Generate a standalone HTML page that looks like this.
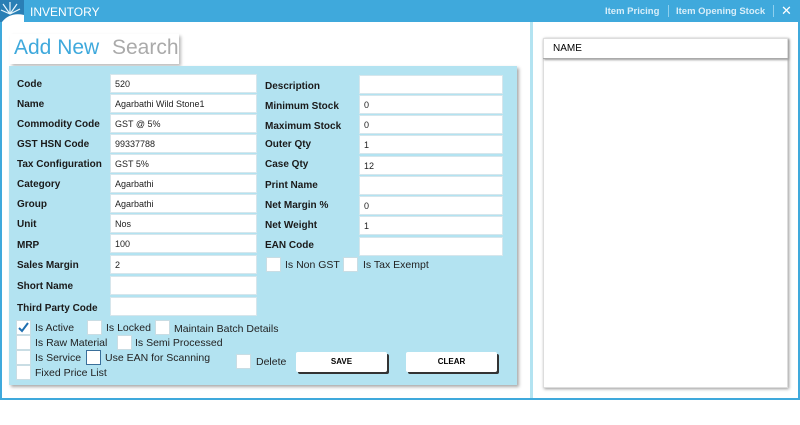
<!DOCTYPE html>
<html><head><meta charset="utf-8"><style>
*{margin:0;padding:0;box-sizing:border-box}
body{width:800px;height:425px;background:#fff;position:relative;overflow:hidden;font-family:"Liberation Sans",sans-serif}
.a{position:absolute}
.lbl{position:absolute;font-size:10px;font-weight:bold;color:#1a1a1a;margin-top:1px}
.inp{position:absolute;background:#fff;border:1px solid #d6e6ec;height:19px;font-size:9px;color:#222;padding:4px 0 0 4px}
.cb{position:absolute;width:15px;height:15px;background:#fff;border:1px solid #c9dde4}
.ct{position:absolute;font-size:10.5px;color:#222}
.btn{position:absolute;background:#fff;border-radius:2px;box-shadow:2px 2px 0 #333;font-size:8px;font-weight:bold;text-align:center;line-height:20px;height:20px}
</style></head><body>
<div class="a" style="left:0;top:0;width:800px;height:22px;background:#3fa9dc"></div>
<div class="a" style="left:0;top:0;width:24px;height:22px;background:#2a7fb5;overflow:hidden">
<svg width="24" height="22"><g stroke="#e8f6fd" stroke-width="1.2"><line x1="10" y1="14" x2="10" y2="2"/><line x1="10" y1="14" x2="3" y2="4"/><line x1="10" y1="14" x2="17" y2="4"/><line x1="10" y1="14" x2="1" y2="10"/><line x1="10" y1="14" x2="20" y2="9"/></g><path d="M2 22 Q10 12 24 15 L24 22Z" fill="#fff"/></svg></div>
<div class="a" style="left:30px;top:5px;color:#fff;font-size:12px">INVENTORY</div>
<div class="a" style="left:605px;top:6px;color:#d8eef9;font-size:9.5px;font-weight:bold">Item Pricing</div>
<div class="a" style="left:668px;top:5px;width:1px;height:12px;background:#8fd0ee"></div>
<div class="a" style="left:676px;top:6px;color:#d8eef9;font-size:9.5px;font-weight:bold">Item Opening Stock</div>
<div class="a" style="left:773px;top:5px;width:1px;height:12px;background:#8fd0ee"></div>
<div class="a" style="left:781px;top:3px;color:#fff;font-size:13px">✕</div>
<div class="a" style="left:0;top:22px;width:2px;height:378px;background:#3fa9dc"></div>
<div class="a" style="left:0;top:398px;width:800px;height:2px;background:#3fa9dc"></div>
<div class="a" style="left:798px;top:22px;width:2px;height:378px;background:#3fa9dc"></div>
<div class="a" style="left:530px;top:22px;width:3px;height:376px;background:#b3e3f1"></div>
<div class="a" style="left:543px;top:38px;width:245px;height:350px;background:#fff;box-shadow:1px 1px 3px #999;border:1px solid #ddd"></div>
<div class="a" style="left:543px;top:38px;width:245px;height:21px;border-bottom:1px solid #aaa;box-shadow:1px 1px 2px #999;font-size:10px;padding:5px 0 0 10px">NAME</div>
<div class="a" style="left:10px;top:34px;width:169px;height:30px;box-shadow:2px 2px 3px #bbb"></div>
<div class="a" style="left:14px;top:36px;font-size:21px;color:#3fa9dc">Add New</div>
<div class="a" style="left:112px;top:36px;font-size:21px;color:#aaa">Search</div>
<div class="a" style="left:9px;top:66px;width:508px;height:319px;background:#b3e3f1;box-shadow:2px 2px 3px #aaa"></div>
<div class="lbl" style="left:17px;top:78px">Code</div><div class="inp" style="left:110px;top:74px;width:147px">520</div>
<div class="lbl" style="left:17px;top:98px">Name</div><div class="inp" style="left:110px;top:94px;width:147px">Agarbathi Wild Stone1</div>
<div class="lbl" style="left:17px;top:118px">Commodity Code</div><div class="inp" style="left:110px;top:114px;width:147px">GST @ 5%</div>
<div class="lbl" style="left:17px;top:138px">GST HSN Code</div><div class="inp" style="left:110px;top:134px;width:147px">99337788</div>
<div class="lbl" style="left:17px;top:158px">Tax Configuration</div><div class="inp" style="left:110px;top:154px;width:147px">GST 5%</div>
<div class="lbl" style="left:17px;top:178px">Category</div><div class="inp" style="left:110px;top:174px;width:147px">Agarbathi</div>
<div class="lbl" style="left:17px;top:198px">Group</div><div class="inp" style="left:110px;top:194px;width:147px">Agarbathi</div>
<div class="lbl" style="left:17px;top:218px">Unit</div><div class="inp" style="left:110px;top:214px;width:147px">Nos</div>
<div class="lbl" style="left:17px;top:239px">MRP</div><div class="inp" style="left:110px;top:234px;width:147px">100</div>
<div class="lbl" style="left:17px;top:259px">Sales Margin</div><div class="inp" style="left:110px;top:255px;width:147px">2</div>
<div class="lbl" style="left:17px;top:280px">Short Name</div><div class="inp" style="left:110px;top:276px;width:147px"></div>
<div class="lbl" style="left:17px;top:302px">Third Party Code</div><div class="inp" style="left:110px;top:297px;width:147px"></div>
<div class="lbl" style="left:265px;top:80px">Description</div><div class="inp" style="left:359px;top:75px;width:144px"></div>
<div class="lbl" style="left:265px;top:100px">Minimum Stock</div><div class="inp" style="left:359px;top:95px;width:144px">0</div>
<div class="lbl" style="left:265px;top:120px">Maximum Stock</div><div class="inp" style="left:359px;top:115px;width:144px">0</div>
<div class="lbl" style="left:265px;top:138px">Outer Qty</div><div class="inp" style="left:359px;top:135px;width:144px">1</div>
<div class="lbl" style="left:265px;top:158px">Case Qty</div><div class="inp" style="left:359px;top:156px;width:144px">12</div>
<div class="lbl" style="left:265px;top:179px">Print Name</div><div class="inp" style="left:359px;top:176px;width:144px"></div>
<div class="lbl" style="left:265px;top:199px">Net Margin %</div><div class="inp" style="left:359px;top:196px;width:144px">0</div>
<div class="lbl" style="left:265px;top:219px">Net Weight</div><div class="inp" style="left:359px;top:216px;width:144px">1</div>
<div class="lbl" style="left:265px;top:239px">EAN Code</div><div class="inp" style="left:359px;top:237px;width:144px"></div>
<div class="cb" style="left:266px;top:257px"></div><div class="ct" style="left:285px;top:259px">Is Non GST</div>
<div class="cb" style="left:343px;top:257px"></div><div class="ct" style="left:363px;top:259px">Is Tax Exempt</div>
<div class="cb" style="left:16px;top:320px"><svg width="13" height="13"><path d="M2 7 L5 10 L11 2" stroke="#1f6fb0" stroke-width="2" fill="none"/></svg></div><div class="ct" style="left:35px;top:322px">Is Active</div>
<div class="cb" style="left:87px;top:320px"></div><div class="ct" style="left:106px;top:322px">Is Locked</div>
<div class="cb" style="left:155px;top:320px"></div><div class="ct" style="left:174px;top:323px">Maintain Batch Details</div>
<div class="cb" style="left:16px;top:335px"></div><div class="ct" style="left:35px;top:337px">Is Raw Material</div>
<div class="cb" style="left:117px;top:335px"></div><div class="ct" style="left:135px;top:337px">Is Semi Processed</div>
<div class="cb" style="left:16px;top:350px"></div><div class="ct" style="left:35px;top:352px">Is Service</div>
<div class="cb" style="left:86px;top:350px;border:1px solid #3a6f9a"></div><div class="ct" style="left:105px;top:352px">Use EAN for Scanning</div>
<div class="cb" style="left:236px;top:354px"></div><div class="ct" style="left:256px;top:356px">Delete</div>
<div class="cb" style="left:16px;top:365px"></div><div class="ct" style="left:35px;top:367px">Fixed Price List</div>
<div class="btn" style="left:296px;top:352px;width:91px">SAVE</div>
<div class="btn" style="left:406px;top:352px;width:91px">CLEAR</div>
</body></html>
